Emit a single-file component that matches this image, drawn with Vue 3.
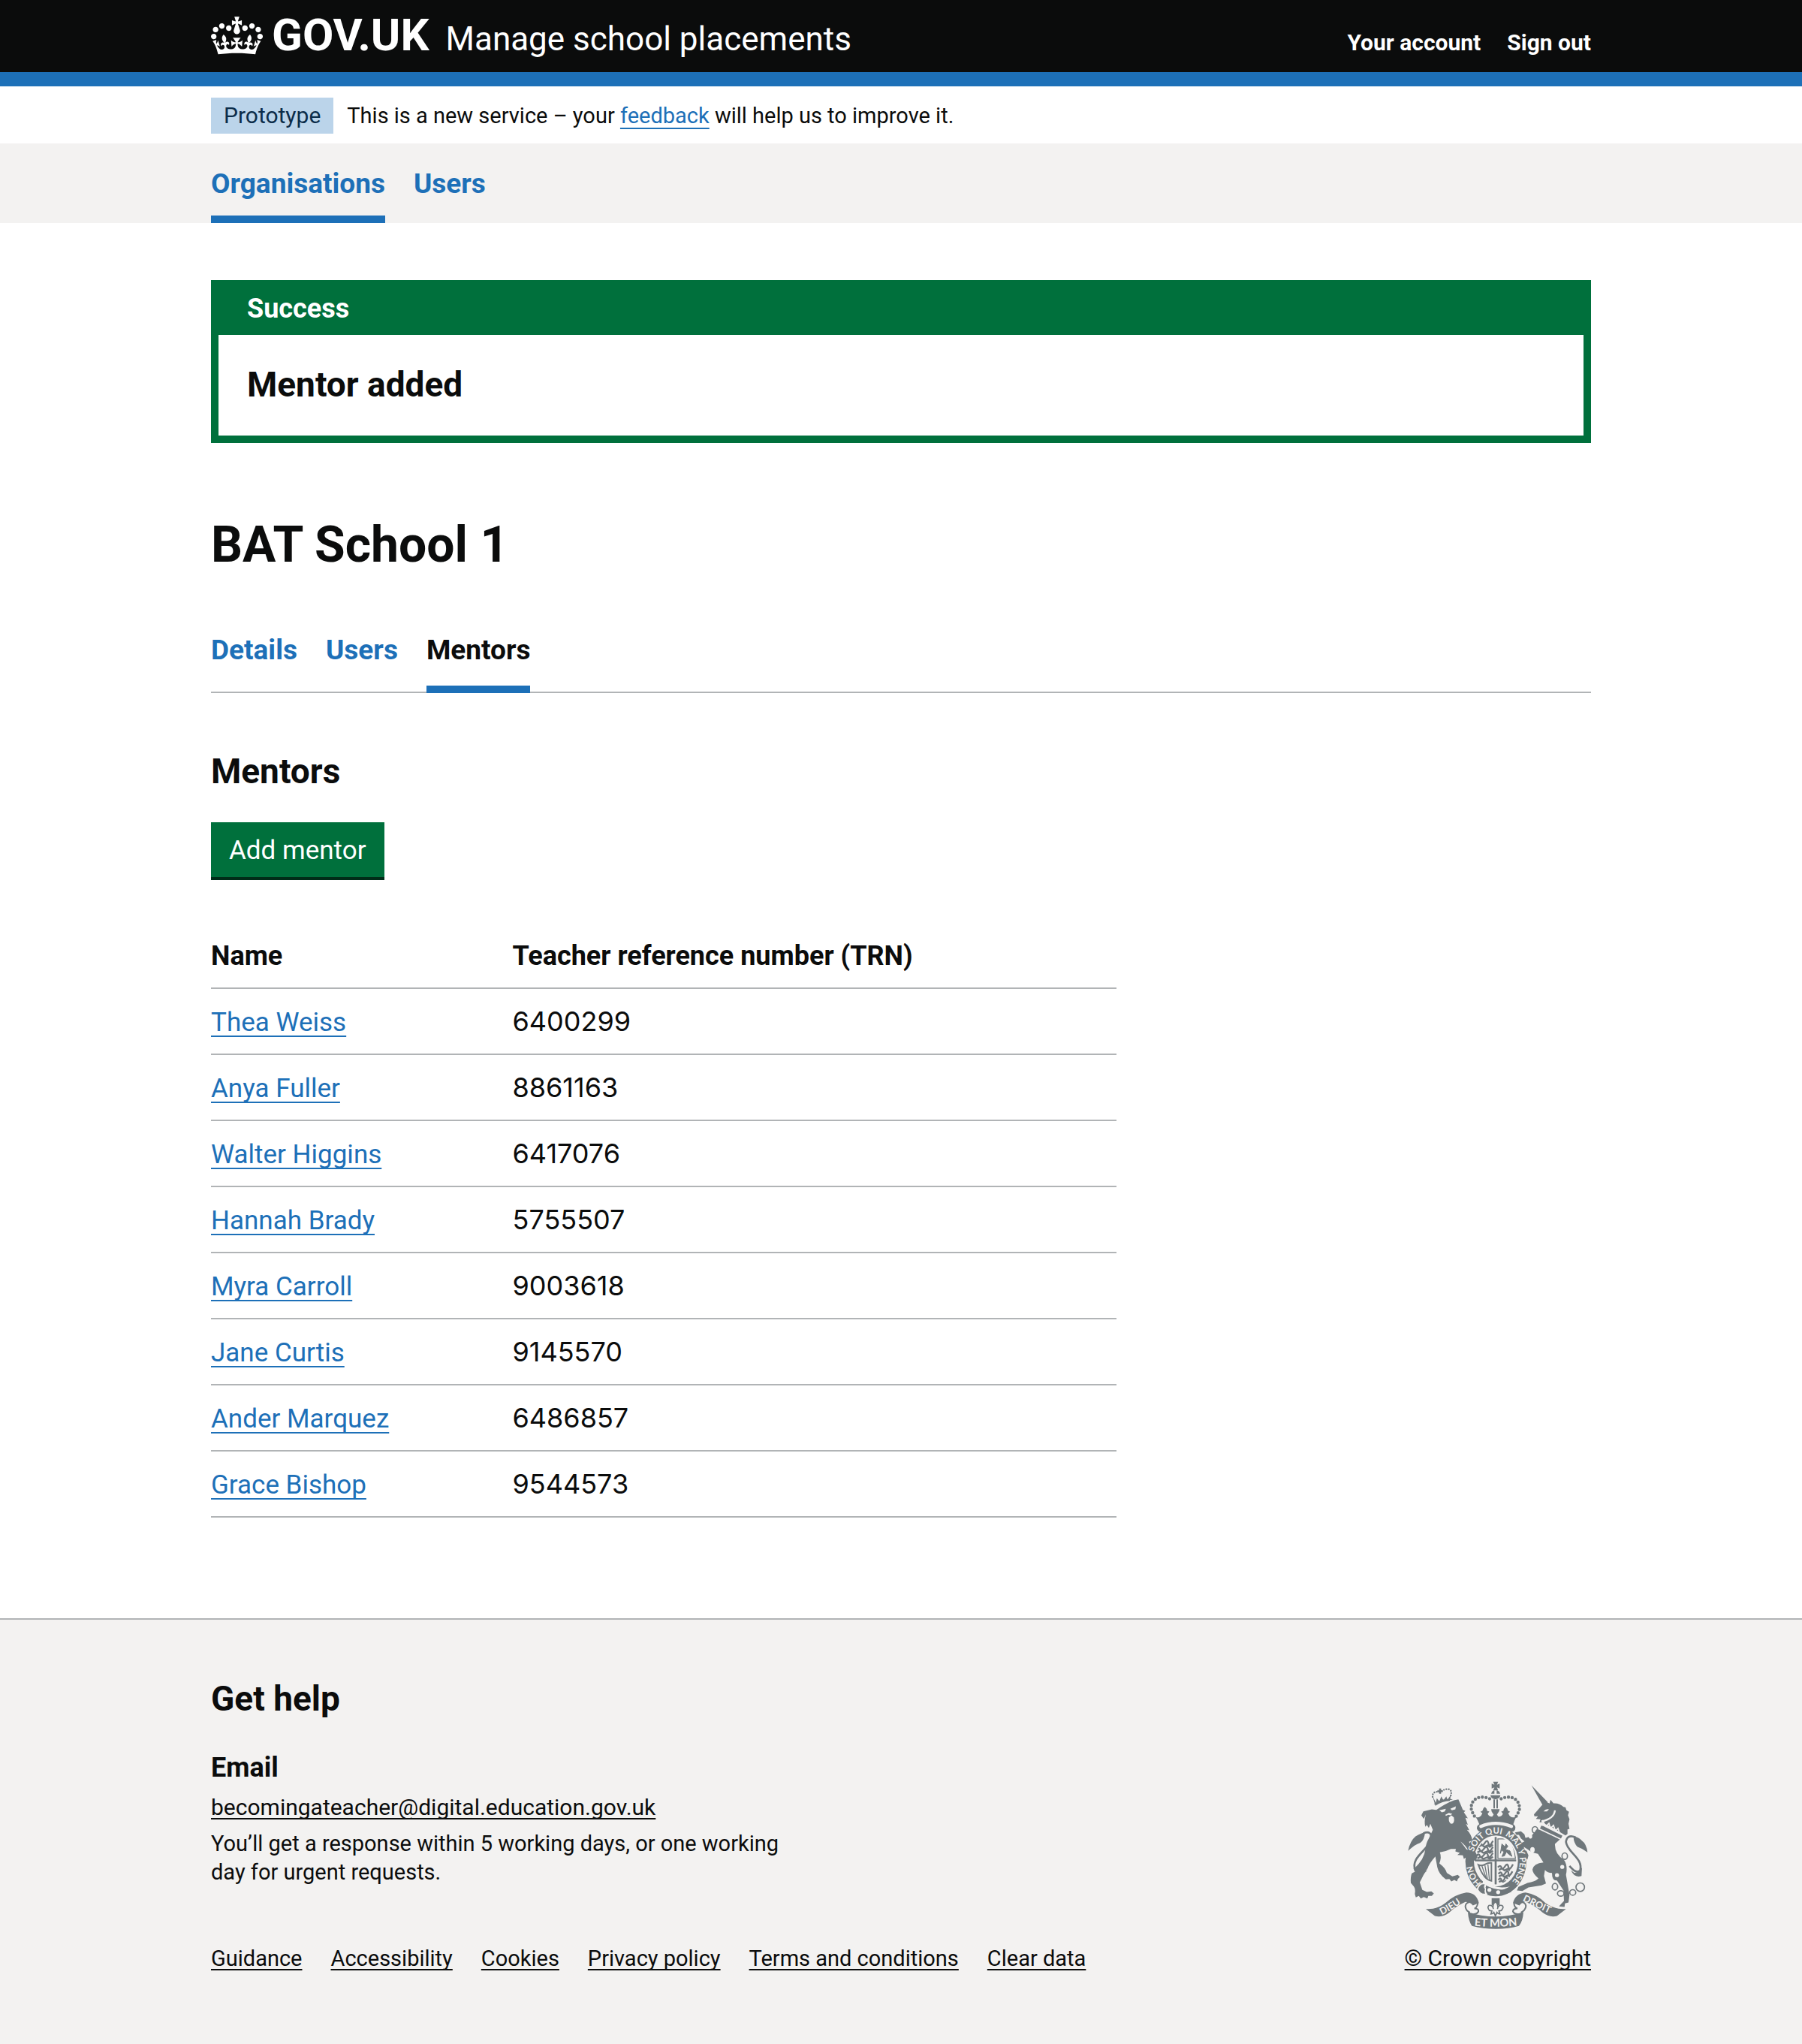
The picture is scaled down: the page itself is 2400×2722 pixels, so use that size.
<script setup>
const accountLinks = ['Your account', 'Sign out']
const primaryNav = [
  { label: 'Organisations', active: true },
  { label: 'Users', active: false }
]
const tabs = [
  { label: 'Details', active: false },
  { label: 'Users', active: false },
  { label: 'Mentors', active: true }
]
const mentors = [
  { name: 'Thea Weiss', trn: '6400299' },
  { name: 'Anya Fuller', trn: '8861163' },
  { name: 'Walter Higgins', trn: '6417076' },
  { name: 'Hannah Brady', trn: '5755507' },
  { name: 'Myra Carroll', trn: '9003618' },
  { name: 'Jane Curtis', trn: '9145570' },
  { name: 'Ander Marquez', trn: '6486857' },
  { name: 'Grace Bishop', trn: '9544573' }
]
const footerLinks = ['Guidance', 'Accessibility', 'Cookies', 'Privacy policy', 'Terms and conditions', 'Clear data']
</script>

<template>
  <div class="page">
    <header class="header">
      <div class="container header-row">
        <a class="logo" href="#">
          <svg class="crown" viewBox="0 0 132 97" aria-hidden="true">
            <path fill="currentColor" fill-rule="evenodd" d="M25 30.2c3.5 1.5 7.7-.2 9.1-3.7 1.5-3.6-.2-7.8-3.9-9.2-3.6-1.4-7.6.3-9.1 3.9-1.4 3.5.3 7.5 3.9 9zM9 39.5c3.6 1.5 7.8-.2 9.2-3.7 1.5-3.6-.2-7.8-3.9-9.1-3.6-1.5-7.6.2-9.1 3.8-1.4 3.5.3 7.5 3.8 9zM4.4 57.2c3.5 1.5 7.7-.2 9.1-3.8 1.5-3.6-.2-7.7-3.9-9.1-3.5-1.5-7.6.3-9.1 3.8-1.4 3.5.3 7.6 3.9 9.1zm38.3-21.4c3.5 1.5 7.7-.2 9.1-3.8 1.5-3.6-.2-7.7-3.9-9.1-3.6-1.5-7.6.3-9.1 3.8-1.3 3.6.4 7.7 3.9 9.1zm64.4-5.6c-3.6 1.5-7.8-.2-9.1-3.7-1.5-3.6.2-7.8 3.8-9.2 3.6-1.4 7.7.3 9.2 3.9 1.3 3.5-.4 7.5-3.9 9zm15.9 9.3c-3.6 1.5-7.7-.2-9.1-3.7-1.5-3.6.2-7.8 3.7-9.1 3.6-1.5 7.7.2 9.2 3.8 1.5 3.5-.3 7.5-3.8 9zm4.7 17.7c-3.6 1.5-7.8-.2-9.2-3.8-1.5-3.6.2-7.7 3.9-9.1 3.6-1.5 7.7.3 9.2 3.8 1.3 3.5-.4 7.6-3.9 9.1zM89.3 35.8c-3.6 1.5-7.8-.2-9.2-3.8-1.4-3.6.2-7.7 3.9-9.1 3.6-1.5 7.7.3 9.2 3.8 1.4 3.6-.3 7.7-3.9 9.1zM69.7 17.7l8.9 4.7V9.3l-8.9 2.8c-.2-.3-.5-.6-.9-.9L72.4 0H59.6l3.5 11.2c-.3.3-.6.5-.9.9l-8.8-2.8v13.1l8.8-4.7c.3.3.6.7.9.9l-5 15.4v.1c-.2.8-.4 1.6-.4 2.4 0 4.1 3.1 7.5 7 8.1h.2c.3 0 .7.1 1 .1.4 0 .7 0 1-.1h.2c4-.6 7.1-4.1 7.1-8.1 0-.8-.1-1.7-.4-2.4V34l-5.1-15.4c.4-.2.7-.6 1-.9zM66 92.8c16.9 0 32.8 1.1 47.1 3.2 4-16.9 8.9-26.7 14-33.5l-9.6-3.4c1 4.9 1.1 7.2 0 10.2-1.5-1.4-3-4.3-4.2-8.7L108.6 76c2.8-2 5-3.2 7.5-3.3-4.4 9.4-10 11.9-13.6 11.2-4.3-.8-6.3-4.6-5.6-7.9 1-4.7 5.7-5.9 8-.5 4.3-8.7-3-11.4-7.6-8.8 7.1-7.2 7.9-13.5 2.1-21.1-8 6.1-8.1 12.3-4.5 20.8-4.7-5.4-12.1-2.5-9.5 6.2 3.4-5.2 7.9-2 7.2 3.1-.6 4.3-6.4 7.8-13.5 7.2-10.3-.9-10.9-8-11.2-13.8 2.5-.5 7.1 1.8 11 7.3L80.2 60c-4.1 4.4-8 5.3-12.3 5.4 1.4-4.4 8-11.6 8-11.6H55.5s6.4 7.2 7.9 11.6c-4.2-.1-8-1-12.3-5.4l1.4 16.4c3.9-5.5 8.5-7.7 10.9-7.3-.3 5.8-.9 12.8-11.1 13.8-7.2.6-12.9-2.9-13.5-7.2-.7-5 3.8-8.3 7.1-3.1 2.7-8.7-4.6-11.6-9.4-6.2 3.7-8.5 3.6-14.7-4.6-20.8-5.8 7.6-5 13.9 2.2 21.1-4.7-2.6-11.9.1-7.7 8.8 2.3-5.5 7.1-4.2 8.1.5.7 3.3-1.3 7.1-5.7 7.9-3.5.7-9-1.8-13.5-11.2 2.5.1 4.7 1.3 7.5 3.3l-4.7-15.4c-1.2 4.4-2.7 7.2-4.3 8.7-1.1-3-.9-5.3 0-10.2l-9.5 3.4c5 6.9 9.9 16.7 14 33.5 14.8-2.1 30.8-3.2 47.7-3.2z" />
          </svg>
          <span class="wordmark">GOV.UK</span>
        </a>
        <a class="service" href="#">Manage school placements</a>
        <nav class="account" aria-label="Account">
          <a v-for="label in accountLinks" :key="label" href="#">{{ label }}</a>
        </nav>
      </div>
    </header>

    <div class="container phase">
      <strong class="tag">Prototype</strong>
      <span>This is a new service – your <a class="link" href="#">feedback</a> will help us to improve it.</span>
    </div>

    <nav class="primary" aria-label="Primary">
      <ul class="container nav-list">
        <li v-for="item in primaryNav" :key="item.label">
          <a class="nav-link" :class="{ 'is-active': item.active }" href="#">{{ item.label }}</a>
        </li>
      </ul>
    </nav>

    <main class="container main">
      <section class="notice" aria-labelledby="notice-title">
        <h2 id="notice-title" class="notice-title">Success</h2>
        <p class="notice-body">Mentor added</p>
      </section>

      <h1 class="title">BAT School 1</h1>

      <nav aria-label="School">
        <ul class="nav-list tabs">
          <li v-for="tab in tabs" :key="tab.label">
            <a class="tab" :class="{ 'is-active': tab.active }" href="#">{{ tab.label }}</a>
          </li>
        </ul>
      </nav>

      <h2 class="heading section-heading">Mentors</h2>
      <button class="button" type="button">Add mentor</button>

      <table class="table">
        <thead>
          <tr>
            <th scope="col">Name</th>
            <th scope="col">Teacher reference number (TRN)</th>
          </tr>
        </thead>
        <tbody>
          <tr v-for="mentor in mentors" :key="mentor.trn">
            <td><a class="link" href="#">{{ mentor.name }}</a></td>
            <td class="trn">{{ mentor.trn }}</td>
          </tr>
        </tbody>
      </table>
    </main>

    <footer class="footer">
      <div class="container footer-row">
        <div class="footer-main">
          <h2 class="heading">Get help</h2>
          <h3 class="subheading">Email</h3>
          <a class="footer-link email" href="mailto:becomingateacher@digital.education.gov.uk">becomingateacher@digital.education.gov.uk</a>
          <p class="footer-text">You’ll get a response within 5 working days, or one working day for urgent requests.</p>
          <ul class="footer-links">
            <li v-for="label in footerLinks" :key="label"><a class="footer-link" href="#">{{ label }}</a></li>
          </ul>
        </div>

        <a class="copyright" href="#">
          <svg class="arms" viewBox="72 68 720 590" aria-hidden="true">
            <defs>
              <path id="garter-top" d="M335 350A95 110 0 1 1 478 478" />
              <path id="garter-left" d="M366 475A95 110 0 0 1 330 400" />
              <path id="scroll-left" d="M208 602Q256 578 300 545" />
              <path id="scroll-right" d="M530 545Q578 568 650 602" />
              <path id="scroll-mid" d="M338 645Q423 654 520 643" />
              <clipPath id="shield"><ellipse cx="423" cy="385" rx="82" ry="95" /></clipPath>
            </defs>

            <!-- centre crown -->
            <g fill="#6f777b">
              <path d="M413 70h20l-5 12 11-5v20l-11-5 5 12h-20l5-12-11 5V77l11 5zM405 118q3-13 13-14v14zM427 104q11 1 14 14h-14zM402 124h40q-2 14-20 16-18-2-20-16zM414 140h6v36h-6zM426 140h6v36h-6z" />
              <path d="M338 208q12 10 26-2l6-10-8-6 8-4q2-12 10-16 8 6 9 16l9 3-7 8q4 12 18 12l6-8-8-12-2-10h34l-3 10-8 12 6 8q14 0 18-12l-7-8 9-3q1-10 9-16 8 4 10 16l8 4-8 6 6 10q14 12 28 2-10 16-16 42-30-17-66-17t-64 17q-8-26-20-42z" />
            </g>
            <path d="M399 138c-44-20-82 6-72 48l14 26M445 138c44-20 80 6 72 48l-14 26" fill="none" stroke="#6f777b" stroke-width="13" stroke-linecap="round" stroke-dasharray="0 15" />

            <!-- garter -->
            <ellipse cx="424" cy="388" rx="122" ry="139" fill="#6f777b" />
            <path d="M364 254q58-30 122 0" fill="none" stroke="#6f777b" stroke-width="32" stroke-linecap="round" />
            <path d="M364 248q58-24 122 0" fill="none" stroke="#f3f2f1" stroke-width="13" stroke-linecap="round" />
            <ellipse cx="424" cy="386" rx="88" ry="102" fill="#f3f2f1" />
            <path d="M372 466q50 36 108 22l-44 22q-40-4-64-28z" fill="#f3f2f1" />
            <path d="M350 500q8-30 34-22-10 12 0 20-6 12 2 20-22 8-36-18z" fill="#6f777b" stroke="#f3f2f1" stroke-width="6" />
            <path d="M384 484q50 26 94 12l8 14q-50 22-102-2z" fill="#6f777b" />
            <circle cx="398" cy="502" r="8" fill="#f3f2f1" />
            <circle cx="433" cy="511" r="8" fill="#f3f2f1" />

            <!-- shield quarters -->
            <g clip-path="url(#shield)" fill="none" stroke="#6f777b">
              <path d="M423 288v196M338 384h170" stroke-width="8" />
              <g stroke-width="7" stroke-linejoin="round">
                <path d="M352 318q10-12 14 0t14-4 14 2 18-10M356 328l12-6 10 8 12-6 10 6 12-8" />
                <path d="M346 342q10-12 14 0t16-4 16 2 20-10M350 352l12-6 12 8 14-6 12 6 12-8" />
                <path d="M346 366q10-12 14 0t16-4 16 2 20-10M350 376l12-6 12 8 14-6 12 6 12-8" />
              </g>
              <path d="M432 412q10-12 14 0t14-4 14 2 18-10M436 422l12-6 10 8 12-6 10 6M434 438q10-12 14 0t14-4 12 2 16-8M436 448l12-6 10 8 12-6 10 4M434 462q8-12 12 0t12-4 12 0M436 470l10-4 10 6 10-6" stroke-width="7" />
              <path d="M432 298h38q28 24 32 78h-70z" stroke-width="4" />
              <path d="M448 318l12 12 4-12 8 10-10 12 18 6 8 22-12-8-10-10-8 16-10 2 8-18-10-8-4 14z" fill="#6f777b" stroke-width="3" />
              <path d="M354 402q12 6 26-2 14-8 26-6v72q-30-4-52-64z" stroke-width="6" />
              <path d="M368 406l16 46M380 404l10 54M392 400l6 62" stroke-width="4" />
            </g>

            <!-- lion -->
            <g fill="#6f777b">
              <path d="M176 158q28-22 66-20l10 4q-38 2-68 20zM170 124l14 30 4-18 10 12 8-20 8 16 12-16 4 14 14-20-4 24q-30 0-58 20z" />
              <path d="M171 130q-2-24 30-20 30-18 42-6 6 10-2 28" fill="none" stroke="#6f777b" stroke-width="7" stroke-linecap="round" stroke-dasharray="0 10" />
              <path d="M197 97h8v7h7v7h-7v7h-8v-7h-7v-7h7z" />
              <path d="M168 180l18 2q38-26 70-38l18-4 6 14 12 28 10 4-6 6 16 24-10-2 10 28-8-4 14 26-10-2q18 18 22 42l-14 6q30 40 34 60l-8 18-10-8-4 10-9-8-3 10-12-20-8 6-4-14-22-2 10-8-18-6 2-10-20 0q-20 10-44 14 8 20-2 44 24 18 30 38l22 14 22-6 8 8-8 8-4 10-10-6-12 6-8-10-14 2q-28-20-34-48l-8-44q-26 30-30 46-20 30-32 58l10 30 18 8 18-2 10 8-8 10h-14l-4 10-14-6-12 6-8-10-12 6-4-14q4-20-4-30l-12-14q-2-24 4-38l14-8-4-12q40-36 44-76 2-24 14-44l16-34-10-24-6 16-8-12-6 8q-6-20 2-50l-8 18-10-14 8-16z" />
              <path d="M73 346q8-40 30-58 22-14 38-16-4 34-20 42-18 4-48 32z" />
              <path d="M92 412q10 16 24 14l22-12q-14 24-34 22zM110 428q14 14 40-4-18 22-40 4z" />
            </g>
            <path d="M134 276q32-14 32 20c-6 44-86 74-64 128 14 4 30-10 46-20" fill="none" stroke="#6f777b" stroke-width="8" />
            <g fill="#f3f2f1">
              <path d="M198 184l26-6-4 10-12 4zM242 178l22-10-2 12-14 4zM222 202l14-8 14 4-8 6-8-2-10 4zM236 212l10-8 10 8q4 22-8 26-14-2-12-26zM282 308q22 16 30 34l-6-2q-12-18-24-32z" />
            </g>

            <!-- unicorn -->
            <g fill="#6f777b">
              <path d="M566 84l66 68-22 10z" />
              <path d="M638 158l4-16 12 14q24-2 40 14l8 2 4 12 10 6-4 14 6 16-4 18 4 20-8 2 0 18-8 6-60-36-32-14q14-12 24-14-14 6-24 2l-2 10-10 0 4-12-18-2 8-10-14 0-2-8 30-34q14-20 32-10z" />
              <path d="M602 260l78 40-20 18q-2 40 36 64 16 24 8 60l14 80-4 30-14 4-2 14-22-2q10-12 20-22l-2-42-26-40q-20 2-20-30-18 0-28-12l-4 24 8 30-18 8-52 8-24 14-22-2 6-14 36-16q30-4 44-18-24-20-24-36 4-24 44-28l-22-34-24-6-32-22-6 10 16 6 8 18-4 16-10-6-6-18-22-10-10-22 10-2 26-14-14-12-8-14-10 0-6-10 24-4 14 12 4 14q28-4 44-34z" />
              <path d="M790 352q-4-34-24-48-12-14-32-16 0 26 16 42 20 6 40 22zM768 412q-10 22-30 22l-14-10q14 32 42 22z" />
            </g>
            <path d="M742 292q-34-14-38 18c4 42 72 66 56 116-16 10-30-6-42-20" fill="none" stroke="#6f777b" stroke-width="8" />
            <path d="M614 188q10-12 22-8l-8 8z" fill="#f3f2f1" />
            <path d="M606 228q50-10 54-44" fill="none" stroke="#f3f2f1" stroke-width="7" />
            <path d="M605 240l88 44-8 16-88-42z" fill="#6f777b" stroke="#f3f2f1" stroke-width="5" />
            <path d="M608 246l6-14 10 16 12-12 6 20 12-12 8 22 10-10 6 18" fill="none" stroke="#f3f2f1" stroke-width="5" />
            <g fill="none" stroke="#6f777b" stroke-width="5">
              <ellipse cx="580" cy="262" rx="11" ry="13" />
              <ellipse cx="699" cy="367" rx="11" ry="13" fill="#f3f2f1" />
              <ellipse cx="660" cy="489" rx="11" ry="13" />
              <ellipse cx="683" cy="516" rx="13" ry="11" />
              <ellipse cx="731" cy="512" rx="12" ry="11" />
              <circle cx="761" cy="491" r="17" />
            </g>
            <g fill="#f3f2f1">
              <ellipse cx="562" cy="288" rx="7" ry="9" />
              <ellipse cx="570" cy="342" rx="9" ry="11" />
              <circle cx="689" cy="410" r="8" />
              <circle cx="668" cy="443" r="8" />
            </g>

            <!-- motto scroll -->
            <g fill="#6f777b">
              <path d="M144 578q42 4 78-24 40-36 84-42 40 0 50 42l-24 10q-10-14-30-14-40 18-64 42-26 22-58 14z" />
              <path d="M704 578q-42 4-82-24-36-36-80-42-40 4-50 42l26 10q10-14 26-14 42 18 66 42 28 22 58 14z" />
              <path d="M312 590q52 18 110 18t112-18q-2 36-18 56-40 12-92 12t-96-12q-14-22-16-56z" />
              <path d="M407 535h32v28h-32z" />
            </g>
            <g fill="none" stroke="#6f777b" stroke-width="6">
              <path d="M330 550q-26 0-28 16 0 18 18 26M352 554q-4 20-14 22 18 0 16 12-6 14-30 10M518 550q24 0 26 16-2 18-20 26M496 554q2 20 14 22-18 0-18 12 6 14 32 10" />
              <path d="M422 548q-14 14-8 30-4-18-18-14-8 8 2 20l10 2-4 12q8 0 12-6l6 14 6-14q4 6 12 6l-4-12 10-2q12-14 2-20-14-4-18 14 6-16-8-30z" fill="#f3f2f1" stroke-width="5" />
            </g>
            <g fill="#f3f2f1" class="motto">
              <text font-size="34"><textPath href="#garter-top">SOIT QUI</textPath></text>
              <text font-size="34"><textPath href="#garter-top" startOffset="160">MAL Y PENSE</textPath></text>
              <text font-size="34"><textPath href="#garter-left">HON</textPath></text>
              <text font-size="38"><textPath href="#scroll-left">DIEU</textPath></text>
              <text font-size="38"><textPath href="#scroll-right">DROIT</textPath></text>
              <text font-size="44"><textPath href="#scroll-mid">ET MON</textPath></text>
            </g>
          </svg>
          <span class="copyright-text">© Crown copyright</span>
        </a>
      </div>
    </footer>
  </div>
</template>

<style>
body {
  margin: 0;
  background: #f3f2f1;
}
</style>

<style scoped>
.page {
  background: #fff;
  color: #0b0c0c;
  font-family: Roboto, "Liberation Sans", sans-serif;
  font-size: 35px;
  line-height: 48px;
}

.container {
  box-sizing: border-box;
  max-width: 1838px;
  margin: 0 auto;
}

h1, h2, h3, p, ul {
  margin: 0;
  padding: 0;
}

ul {
  list-style: none;
}

a {
  color: inherit;
  text-decoration: none;
}

.link, .footer-link, .copyright-text {
  text-decoration: underline;
  text-decoration-thickness: 2px;
  text-decoration-skip-ink: none;
  text-underline-offset: 6px;
}

.link {
  color: #1d70b8;
}

.footer-link, .copyright-text {
  text-underline-offset: 4px;
}

/* Header */
.header {
  background: #0b0c0c;
  color: #fff;
  border-bottom: 19px solid #1d70b8;
}

.header-row {
  display: flex;
  align-items: baseline;
  padding: 17px 0 19px;
}

.logo {
  display: flex;
  align-items: center;
  gap: 12px;
}

.crown {
  width: 69px;
  height: 51px;
}

.wordmark {
  align-self: baseline;
  font-size: 60px;
  font-weight: 700;
  line-height: 60px;
}

.service {
  margin-left: 22px;
  font-size: 44px;
  line-height: 50px;
}

.account {
  display: flex;
  gap: 35px;
  margin-left: auto;
  font-size: 30px;
  font-weight: 700;
  line-height: 38px;
}

/* Phase banner */
.phase {
  display: flex;
  align-items: baseline;
  gap: 18px;
  padding: 15px 0 13px;
  font-size: 29px;
}

.tag {
  padding: 0 17px;
  background: #bbd4ea;
  color: #0c2d4a;
  font-size: 30px;
  font-weight: 400;
}

/* Navigation */
.primary {
  background: #f3f2f1;
}

.nav-list {
  display: flex;
  gap: 38px;
}

.nav-link, .tab {
  display: block;
  color: #1d70b8;
  font-size: 37px;
  font-weight: 700;
  border-bottom: 10px solid transparent;
}

.nav-link {
  padding: 30px 0 18px;
}

.is-active {
  border-bottom-color: #1d70b8;
}

.tabs {
  margin-top: 76px;
  border-bottom: 2px solid #b1b4b6;
}

.tab {
  margin-bottom: -2px;
  padding-bottom: 23px;
}

.tab.is-active {
  color: #0b0c0c;
}

/* Main */
.main {
  padding: 76px 0 134px;
}

.notice {
  border: 10px solid #00703c;
}

.notice-title {
  padding: 6px 38px 13px;
  background: #00703c;
  color: #fff;
  font-size: 36px;
  line-height: 44px;
}

.notice-body {
  padding: 38px 38px 40px;
  font-size: 46px;
  font-weight: 700;
  line-height: 56px;
}

.title {
  margin-top: 96px;
  font-size: 66px;
  line-height: 80px;
}

.heading {
  font-size: 46px;
  line-height: 56px;
}

.section-heading {
  margin-top: 76px;
}

.button {
  display: block;
  margin-top: 40px;
  padding: 16px 24px 13px;
  border: 0;
  background: #00703c;
  box-shadow: 0 4px 0 #002d18;
  color: #fff;
  font-family: inherit;
  font-size: 35px;
  line-height: 44px;
}

.table {
  width: 65.6%;
  margin-top: 61px;
  border-collapse: separate;
  border-spacing: 0;
  table-layout: fixed;
}

.table th, .table td {
  padding: 19px 0 17px;
  border-bottom: 2px solid #b1b4b6;
  text-align: left;
  vertical-align: baseline;
}

.table th {
  padding: 20px 0 18px;
  font-size: 36px;
}

.table th:first-child {
  width: 33.3%;
}

.table .trn {
  font-family: Inter, sans-serif;
  font-size: 36px;
}

/* Footer */
.footer {
  padding: 77px 0 95px;
  border-top: 2px solid #b1b4b6;
  background: #f3f2f1;
  font-size: 29px;
  line-height: 38px;
}

.footer-row {
  display: flex;
  align-items: flex-end;
  justify-content: space-between;
}

.subheading {
  margin-top: 40px;
  font-size: 36px;
  line-height: 48px;
}

.email {
  display: block;
  width: max-content;
  margin-top: 10px;
  font-size: 30px;
}

.footer-text {
  max-width: 800px;
  margin-top: 10px;
}

.footer-links {
  display: flex;
  flex-wrap: wrap;
  gap: 38px;
  margin-top: 77px;
}

.copyright {
  display: flex;
  flex-direction: column;
  align-items: center;
  gap: 20px;
  font-size: 30px;
}

.arms {
  width: 240px;
  height: 197px;
}

.motto {
  font-family: Lato, sans-serif;
  font-weight: 700;
}
</style>
